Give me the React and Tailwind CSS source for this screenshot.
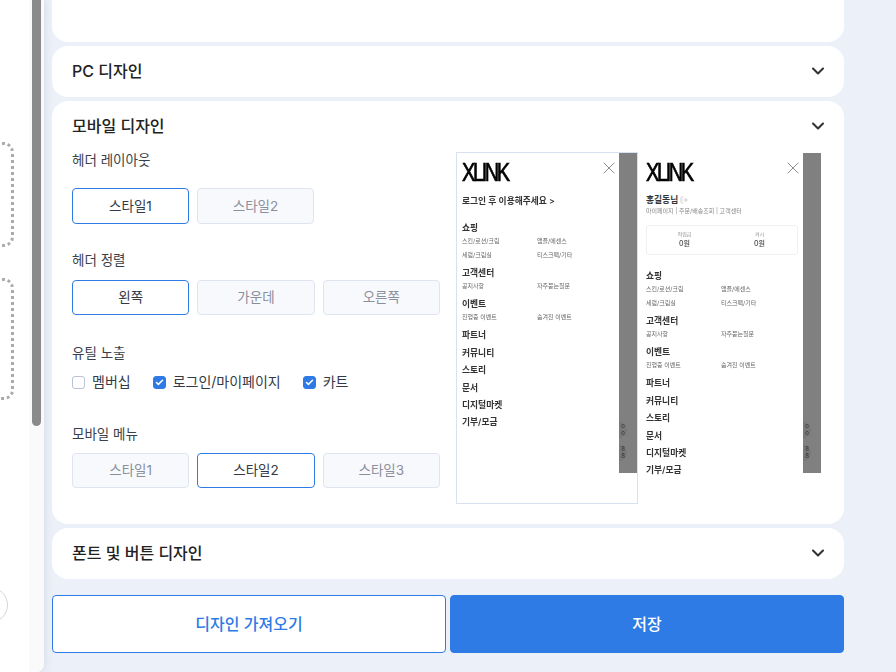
import React from 'react';
import { ChevronDown, Check, X, LogOut } from 'lucide-react';

const font = "font-['Inter','Noto_Sans_CJK_KR',sans-serif]";

// Accordion title row
const Title = ({ children }) => (
  <div className="flex h-[51px] items-center justify-between pb-px pl-5 pr-4">
    <span className="text-base font-medium text-[#222]">{children}</span>
    <ChevronDown size={20} strokeWidth={2.5} className="text-[#333]" />
  </div>
);

const Option = ({ label, active, className = 'h-[35px]' }) => (
  <button
    className={`flex-1 rounded border text-[13.5px] ${className} ${
      active
        ? 'border-[#2f7be5] bg-white text-[#333a46]'
        : 'border-[#dfe5f0] bg-[#f8f9fc] text-[#8a8f9c]'
    }`}
  >
    {label}
  </button>
);

const CheckItem = ({ label, checked }) => (
  <div className="flex items-center gap-[7px]">
    <span
      className={`flex h-[13px] w-[13px] items-center justify-center rounded-[3px] border ${
        checked ? 'border-[#2f7be5] bg-[#2f7be5]' : 'border-[#b9c3d4] bg-white'
      }`}
    >
      {checked && <Check size={9} strokeWidth={4} className="text-white" />}
    </span>
    <span className="text-sm leading-5 text-[#333a46]">{label}</span>
  </div>
);

const Label = ({ children, className = '' }) => (
  <div className={`text-[13.5px] leading-5 text-[#3a3f4a] ${className}`}>{children}</div>
);

const MenuHead = ({ children, className = '' }) => (
  <div className={`text-[8.75px] font-semibold leading-3 text-[#333] ${className}`}>{children}</div>
);

const SubRow = ({ a, b }) => (
  <div className="flex text-[6px] leading-[14px] text-[#666]">
    <span className="w-[75px]">{a}</span>
    <span>{b}</span>
  </div>
);

const MenuList = () => (
  <div>
    <MenuHead>쇼핑</MenuHead>
    <SubRow a="스킨/로션/크림" b="앰플/에센스" />
    <SubRow a="세럼/크림실" b="티스크팩/기타" />
    <MenuHead className="mt-[5px]">고객센터</MenuHead>
    <SubRow a="공지사항" b="자주묻는질문" />
    <MenuHead className="mt-[5px]">이벤트</MenuHead>
    <SubRow a="진행중 이벤트" b="숨겨진 이벤트" />
    <MenuHead className="mt-[5px]">파트너</MenuHead>
    <MenuHead className="mt-[5.5px]">커뮤니티</MenuHead>
    <MenuHead className="mt-[5.5px]">스토리</MenuHead>
    <MenuHead className="mt-[5.5px]">문서</MenuHead>
    <MenuHead className="mt-[5.5px]">디지털마켓</MenuHead>
    <MenuHead className="mt-[5px]">기부/모금</MenuHead>
  </div>
);

const Logo = () => (
  <div className="h-[18px] origin-left scale-x-[0.8] font-['Liberation_Sans',sans-serif] text-[25px] leading-[18px] tracking-[-3px] text-black [-webkit-text-stroke:0.7px_black]">
    XLINK
  </div>
);

// Gray dimmed page behind the drawer, with the floating buttons peeking out
const Dim = () => (
  <div className="relative h-full w-[18px] shrink-0 bg-[#808080]">
    <div className="absolute left-0 top-[269px] h-4 w-2 rounded-r-full bg-[#787878] text-center text-[6px] leading-[7px] text-[#333]">
      <span className="block">o</span>
      <span className="block">o</span>
    </div>
    <div className="absolute left-0 top-[292px] h-4 w-2 rounded-r-full bg-[#787878] text-center text-[6px] leading-[7px] text-[#333]">
      <span className="block">8</span>
      <span className="block">8</span>
    </div>
  </div>
);

const Preview = () => (
  <div className="flex shrink-0 items-start">
    <div className="h-[352px] w-[182px] border border-[#d8e1ef] bg-white">
      <div className="flex h-[320px] blur-[0.4px]">
        <div className="relative flex-1 pl-[5px] pt-[10px]">
          <Logo />
          <X size={20} strokeWidth={0.9} className="absolute left-[142px] top-[5px] text-[#666]" />
          <div className="mt-[14px] text-[8.75px] font-semibold leading-3 text-[#333]">
            로그인 후 이용해주세요 &gt;
          </div>
          <div className="mt-[15px]">
            <MenuList />
          </div>
        </div>
        <Dim />
      </div>
    </div>
    <div className="mt-px flex h-[320px] w-[183px] blur-[0.4px]">
      <div className="relative flex-1 bg-white pl-2 pr-[5px] pt-[10px]">
        <Logo />
        <X size={20} strokeWidth={0.9} className="absolute left-[145px] top-[5px] text-[#666]" />
        <div className="mt-[13px] flex items-center gap-[2px] text-[8.75px] font-semibold leading-3 text-[#333]">
          홍길동님
          <LogOut size={8} className="text-[#bbb]" />
        </div>
        <div className="text-[6px] leading-[10px] text-[#888]">마이페이지 | 주문/배송조회 | 고객센터</div>
        <div className="mt-[9px] grid h-[30px] grid-cols-2 rounded-[3px] border border-[#f0f0f0] pt-[4px] text-center">
          <div>
            <div className="text-[5px] leading-[9px] text-[#888]">적립금</div>
            <div className="text-[7px] font-medium leading-[10px] text-[#444]">0원</div>
          </div>
          <div>
            <div className="text-[5px] leading-[9px] text-[#888]">커시</div>
            <div className="text-[7px] font-medium leading-[10px] text-[#444]">0원</div>
          </div>
        </div>
        <div className="mt-[15px]">
          <MenuList />
        </div>
      </div>
      <Dim />
    </div>
  </div>
);

export default function App() {
  return (
    <div className={`flex h-[672px] w-[896px] overflow-hidden bg-[#ecf0f8] ${font}`}>
      {/* clipped side panel */}
      <div className="relative h-full w-[44px] shrink-0 overflow-hidden rounded-br-lg bg-white shadow-[0_0_8px_rgba(120,140,180,0.25)]">
        <div className="absolute left-[29px] top-0 h-full w-[15px] bg-[#fafafa]" />
        <div className="absolute left-[32px] top-0 h-[426px] w-[9px] rounded-b-[5px] bg-[#8a8a8a]" />
        <div className="absolute left-[-86px] top-[142px] h-[105px] w-[100px] rounded-[10px] border-[3px] border-dotted border-[#aaa]" />
        <div className="absolute left-[-86px] top-[278px] h-[122px] w-[100px] rounded-[10px] border-[3px] border-dotted border-[#aaa]" />
        <div className="absolute left-[-28px] top-[587px] h-9 w-9 rounded-full border border-[#d5d5d5]" />
      </div>

      <div className="ml-2 w-[792px]">
        <div className="h-[42px] rounded-b-2xl bg-white" />
        <div className="mt-1 rounded-2xl bg-white">
          <Title>PC 디자인</Title>
        </div>
        <div className="mt-1 h-[423px] rounded-2xl bg-white">
          <Title>모바일 디자인</Title>
          <div className="-mt-[2px] flex gap-4 pl-5">
            <div className="w-[368px]">
              <Label>헤더 레이아웃</Label>
              <div className="mt-[18px] flex gap-2 pr-[126px]">
                <Option label="스타일1" active className="h-9" />
                <Option label="스타일2" className="h-9" />
              </div>
              <Label className="mt-[26px]">헤더 정렬</Label>
              <div className="mt-[10px] flex gap-2">
                <Option label="왼쪽" active />
                <Option label="가운데" />
                <Option label="오른쪽" />
              </div>
              <Label className="mt-[28px]">유틸 노출</Label>
              <div className="mt-[9px] flex gap-[22px]">
                <CheckItem label="멤버십" />
                <CheckItem label="로그인/마이페이지" checked />
                <CheckItem label="카트" checked />
              </div>
              <Label className="mt-[32px]">모바일 메뉴</Label>
              <div className="mt-[9px] flex gap-2">
                <Option label="스타일1" />
                <Option label="스타일2" active />
                <Option label="스타일3" />
              </div>
            </div>
            <div className="pt-[2px]">
              <Preview />
            </div>
          </div>
        </div>
        <div className="mt-1 rounded-2xl bg-white">
          <Title>폰트 및 버튼 디자인</Title>
        </div>
        <div className="mt-4 flex gap-1">
          <button className="h-[58px] flex-1 rounded border border-[#2f7be5] bg-white text-base font-medium text-[#2f7be5]">
            디자인 가져오기
          </button>
          <button className="h-[58px] flex-1 rounded border border-[#2f7be5] bg-[#2f7be5] text-base font-medium text-white">
            저장
          </button>
        </div>
      </div>
    </div>
  );
}
